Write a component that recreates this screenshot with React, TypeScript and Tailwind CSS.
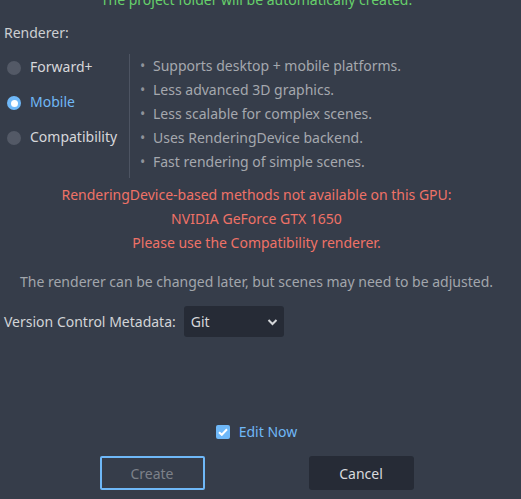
import React from "react";

const bullets = [
  "Supports desktop + mobile platforms.",
  "Less advanced 3D graphics.",
  "Less scalable for complex scenes.",
  "Uses RenderingDevice backend.",
  "Fast rendering of simple scenes.",
];

const renderers = ["Forward+", "Mobile", "Compatibility"];

function Radio({ checked }: { checked: boolean }) {
  return checked ? (
    <span className="mt-[3px] flex h-[14px] w-[14px] shrink-0 items-center justify-center rounded-full bg-[#6fb8f8]">
      <span className="h-[7px] w-[7px] rounded-full bg-white" />
    </span>
  ) : (
    <span className="mt-[3px] h-[14px] w-[14px] shrink-0 rounded-full bg-[#535966]" />
  );
}

export default function App() {
  const selected = "Mobile";
  return (
    <div className="h-[499px] w-[521px] overflow-hidden bg-[#363d4a] pr-[8px] font-['Noto_Sans',sans-serif] text-[14px] text-[#d6d7da]">
      <p className="-mt-[10px] text-center leading-[20px] text-[#66d06a]">
        The project folder will be automatically created.
      </p>

      <p className="mt-[13px] pl-[4px] leading-[20px] text-[#cdcfd2]">Renderer:</p>

      <div className="mt-[6px] flex">
        <div className="w-[129px] pl-[7px]">
          {renderers.map((r) => (
            <div key={r} className="flex h-[35px] items-center gap-[9px]">
              <Radio checked={r === selected} />
              <span className={r === selected ? "text-[#70b8f6]" : "text-[#d6d7da]"}>{r}</span>
            </div>
          ))}
        </div>
        <div className="mt-[5px] border-l border-[#4d5462] pb-[4px] pl-[10px] leading-[24px] text-[#a5a8ae]">
          {bullets.map((b) => (
            <div key={b} className="flex">
              <span className="w-[13px] text-[#8f939a]">•</span>
              <span>{b}</span>
            </div>
          ))}
        </div>
      </div>

      <div className="mt-[5px] text-center leading-[24px] text-[#ef7267]">
        <p>RenderingDevice-based methods not available on this GPU:</p>
        <p>NVIDIA GeForce GTX 1650</p>
        <p>Please use the Compatibility renderer.</p>
      </div>

      <p className="mt-[15px] text-center leading-[24px] text-[#a2a6ac]">
        The renderer can be changed later, but scenes may need to be adjusted.
      </p>

      <div className="mt-[12px] flex items-center gap-[8px] pl-[4px]">
        <span className="leading-[20px] text-[#d2d4d7]">Version Control Metadata:</span>
        <div className="flex h-[31px] w-[100px] items-center justify-between rounded-[3px] bg-[#262b36] pl-[7px] pr-[6px]">
          <span className="text-[#d6d7da]">Git</span>
          <svg width="11" height="8" viewBox="0 0 11 8" className="mt-[1px]">
            <path d="M1.5 2 L5.5 6 L9.5 2" fill="none" stroke="#d4d6d9" strokeWidth="2" />
          </svg>
        </div>
      </div>

      <div className="mt-[85px] flex h-[20px] items-center justify-center gap-[9px]">
        <span className="flex h-[14px] w-[14px] items-center justify-center rounded-[2px] bg-[#6fb8f8]">
          <svg width="10" height="8" viewBox="0 0 10 8">
            <path d="M1 4.2 L3.8 6.8 L9 1.2" fill="none" stroke="#ffffff" strokeWidth="2" />
          </svg>
        </span>
        <span className="leading-[20px] text-[#70b8f6]">Edit Now</span>
      </div>

      <div className="mt-[14px] flex justify-center gap-[104px]">
        <button className="h-[34px] w-[105px] rounded-[2px] border-2 border-[#6fb8f8] text-[#7d8189]">
          Create
        </button>
        <button className="h-[34px] w-[105px] rounded-[3px] bg-[#262b36] text-[#d9dadd]">
          Cancel
        </button>
      </div>
    </div>
  );
}
